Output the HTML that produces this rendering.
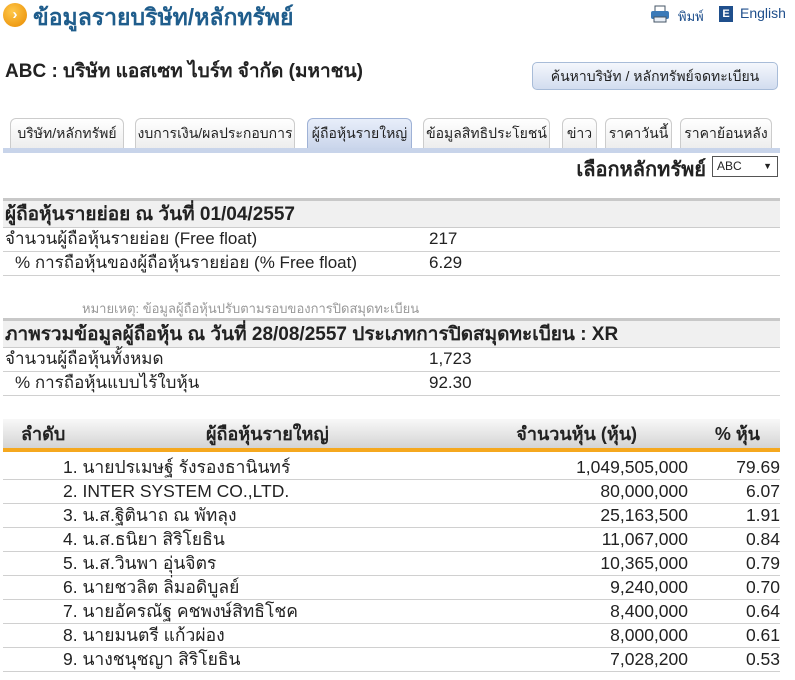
<!DOCTYPE html>
<html><head><meta charset="utf-8"><style>
*{margin:0;padding:0;box-sizing:border-box}
body{width:795px;height:680px;background:#fff;font-family:Tahoma,"Liberation Sans","Noto Sans CJK SC",sans-serif;color:#222;position:relative;overflow:hidden;font-size:17px}
.a{position:absolute;white-space:nowrap}
.tab{position:absolute;top:118px;height:32px;border:1px solid #ccc;border-bottom:none;border-radius:6px 6px 0 0;background:linear-gradient(#fff,#ececec);font-size:14px;text-align:center;line-height:28px;color:#222}
.bar{position:absolute;left:3px;width:777px;background:#f0f0f0;border-top:3px solid #c8c8c8;border-bottom:1px solid #ccc;font-weight:bold;font-size:19px;padding-left:2px}
.row{position:absolute;left:3px;width:777px;height:24px;border-bottom:1px solid #d0d0d0;font-size:17px;line-height:22px}
.row span{position:absolute}
.t span{font-size:17.5px}
</style></head><body>
<div class="a" style="left:3px;top:3px;width:24px;height:24px;border-radius:50%;background:radial-gradient(circle at 40% 35%,#ffc84a,#e88a00);color:#fff;font-weight:bold;font-size:15px;text-align:center;line-height:23px">›</div>
<div class="a" style="left:33px;top:0px;font-size:23px;font-weight:bold;color:#1f5d8c">ข้อมูลรายบริษัท/หลักทรัพย์</div>
<svg class="a" style="left:650px;top:5px" width="20" height="18" viewBox="0 0 20 18"><rect x="5" y="1" width="10" height="6" fill="#fff" stroke="#456"/><rect x="1" y="6" width="18" height="8" rx="2" fill="#3a7ab8"/><rect x="4" y="12" width="12" height="5" fill="#e8eef6" stroke="#456"/></svg>
<div class="a" style="left:678px;top:6px;font-size:13px;color:#1f4f8c">พิมพ์</div>
<div class="a" style="left:719px;top:6px;width:14px;height:16px;background:#1f4f8c;color:#fff;font-size:11px;font-weight:bold;text-align:center;line-height:16px">E</div>
<div class="a" style="left:740px;top:5px;font-size:14px;color:#1f4f8c">English</div>
<div class="a" style="left:5px;top:56px;font-size:19px;font-weight:bold">ABC : บริษัท แอสเซท ไบร์ท จำกัด (มหาชน)</div>
<div class="a" style="left:532px;top:62px;width:246px;height:28px;border:1px solid #a8bcd8;border-radius:5px;background:linear-gradient(#f4f7fc,#d2ddef);font-size:14px;text-align:center;line-height:26px">ค้นหาบริษัท / หลักทรัพย์จดทะเบียน</div>
<div class="tab" style="left:10px;width:114px">บริษัท/หลักทรัพย์</div>
<div class="tab" style="left:135px;width:160px">งบการเงิน/ผลประกอบการ</div>
<div class="tab" style="left:307px;width:105px;background:linear-gradient(#e8eefa,#c8d4ea);border-color:#9fb2d6">ผู้ถือหุ้นรายใหญ่</div>
<div class="tab" style="left:423px;width:127px">ข้อมูลสิทธิประโยชน์</div>
<div class="tab" style="left:562px;width:35px">ข่าว</div>
<div class="tab" style="left:605px;width:67px">ราคาวันนี้</div>
<div class="tab" style="left:680px;width:92px">ราคาย้อนหลัง</div>
<div class="a" style="left:3px;top:148px;width:777px;height:5px;background:#c8d4ea"></div>
<div class="a" style="right:89px;top:153px;font-size:20px;font-weight:bold">เลือกหลักทรัพย์</div>
<div class="a" style="left:712px;top:156px;width:66px;height:21px;border:1px solid #555;font-size:12px;line-height:19px;padding-left:4px">ABC<span style="position:absolute;right:5px;font-size:9px">▼</span></div>
<div class="bar" style="top:198px;height:30px;line-height:27px">ผู้ถือหุ้นรายย่อย ณ วันที่ 01/04/2557</div>
<div class="row" style="top:228px"><span style="left:2px">จำนวนผู้ถือหุ้นรายย่อย (Free float)</span><span style="left:426px">217</span></div>
<div class="row" style="top:252px"><span style="left:12px">% การถือหุ้นของผู้ถือหุ้นรายย่อย (% Free float)</span><span style="left:426px">6.29</span></div>
<div class="a" style="left:82px;top:298px;font-size:13px;color:#999">หมายเหตุ: ข้อมูลผู้ถือหุ้นปรับตามรอบของการปิดสมุดทะเบียน</div>
<div class="bar" style="top:318px;height:30px;line-height:27px">ภาพรวมข้อมูลผู้ถือหุ้น ณ วันที่ 28/08/2557 ประเภทการปิดสมุดทะเบียน : XR</div>
<div class="row" style="top:348px"><span style="left:2px">จำนวนผู้ถือหุ้นทั้งหมด</span><span style="left:426px">1,723</span></div>
<div class="row" style="top:372px"><span style="left:12px">% การถือหุ้นแบบไร้ใบหุ้น</span><span style="left:426px">92.30</span></div>
<div class="a" style="left:3px;top:419px;width:777px;height:33px;background:linear-gradient(#f8f8f8,#d4d4d4);border-bottom:4px solid #f5a81f;font-weight:bold;font-size:18px;line-height:31px">
<span class="a" style="left:18px">ลำดับ</span><span class="a" style="left:203px">ผู้ถือหุ้นรายใหญ่</span><span class="a" style="right:143px">จำนวนหุ้น (หุ้น)</span><span class="a" style="right:20px">% หุ้น</span></div>
<div class="row t" style="top:456px"><span style="left:60px">1. นายปรเมษฐ์ รังรองธานินทร์</span><span style="right:92px">1,049,505,000</span><span style="right:0">79.69</span></div>
<div class="row t" style="top:480px"><span style="left:60px">2. INTER SYSTEM CO.,LTD.</span><span style="right:92px">80,000,000</span><span style="right:0">6.07</span></div>
<div class="row t" style="top:504px"><span style="left:60px">3. น.ส.ฐิตินาถ ณ พัทลุง</span><span style="right:92px">25,163,500</span><span style="right:0">1.91</span></div>
<div class="row t" style="top:528px"><span style="left:60px">4. น.ส.ธนิยา สิริโยธิน</span><span style="right:92px">11,067,000</span><span style="right:0">0.84</span></div>
<div class="row t" style="top:552px"><span style="left:60px">5. น.ส.วินพา อุ่นจิตร</span><span style="right:92px">10,365,000</span><span style="right:0">0.79</span></div>
<div class="row t" style="top:576px"><span style="left:60px">6. นายชวลิต ลิ่มอดิบูลย์</span><span style="right:92px">9,240,000</span><span style="right:0">0.70</span></div>
<div class="row t" style="top:600px"><span style="left:60px">7. นายอัครณัฐ คชพงษ์สิทธิโชค</span><span style="right:92px">8,400,000</span><span style="right:0">0.64</span></div>
<div class="row t" style="top:624px"><span style="left:60px">8. นายมนตรี แก้วผ่อง</span><span style="right:92px">8,000,000</span><span style="right:0">0.61</span></div>
<div class="row t" style="top:648px"><span style="left:60px">9. นางชนุชญา สิริโยธิน</span><span style="right:92px">7,028,200</span><span style="right:0">0.53</span></div>
</body></html>
